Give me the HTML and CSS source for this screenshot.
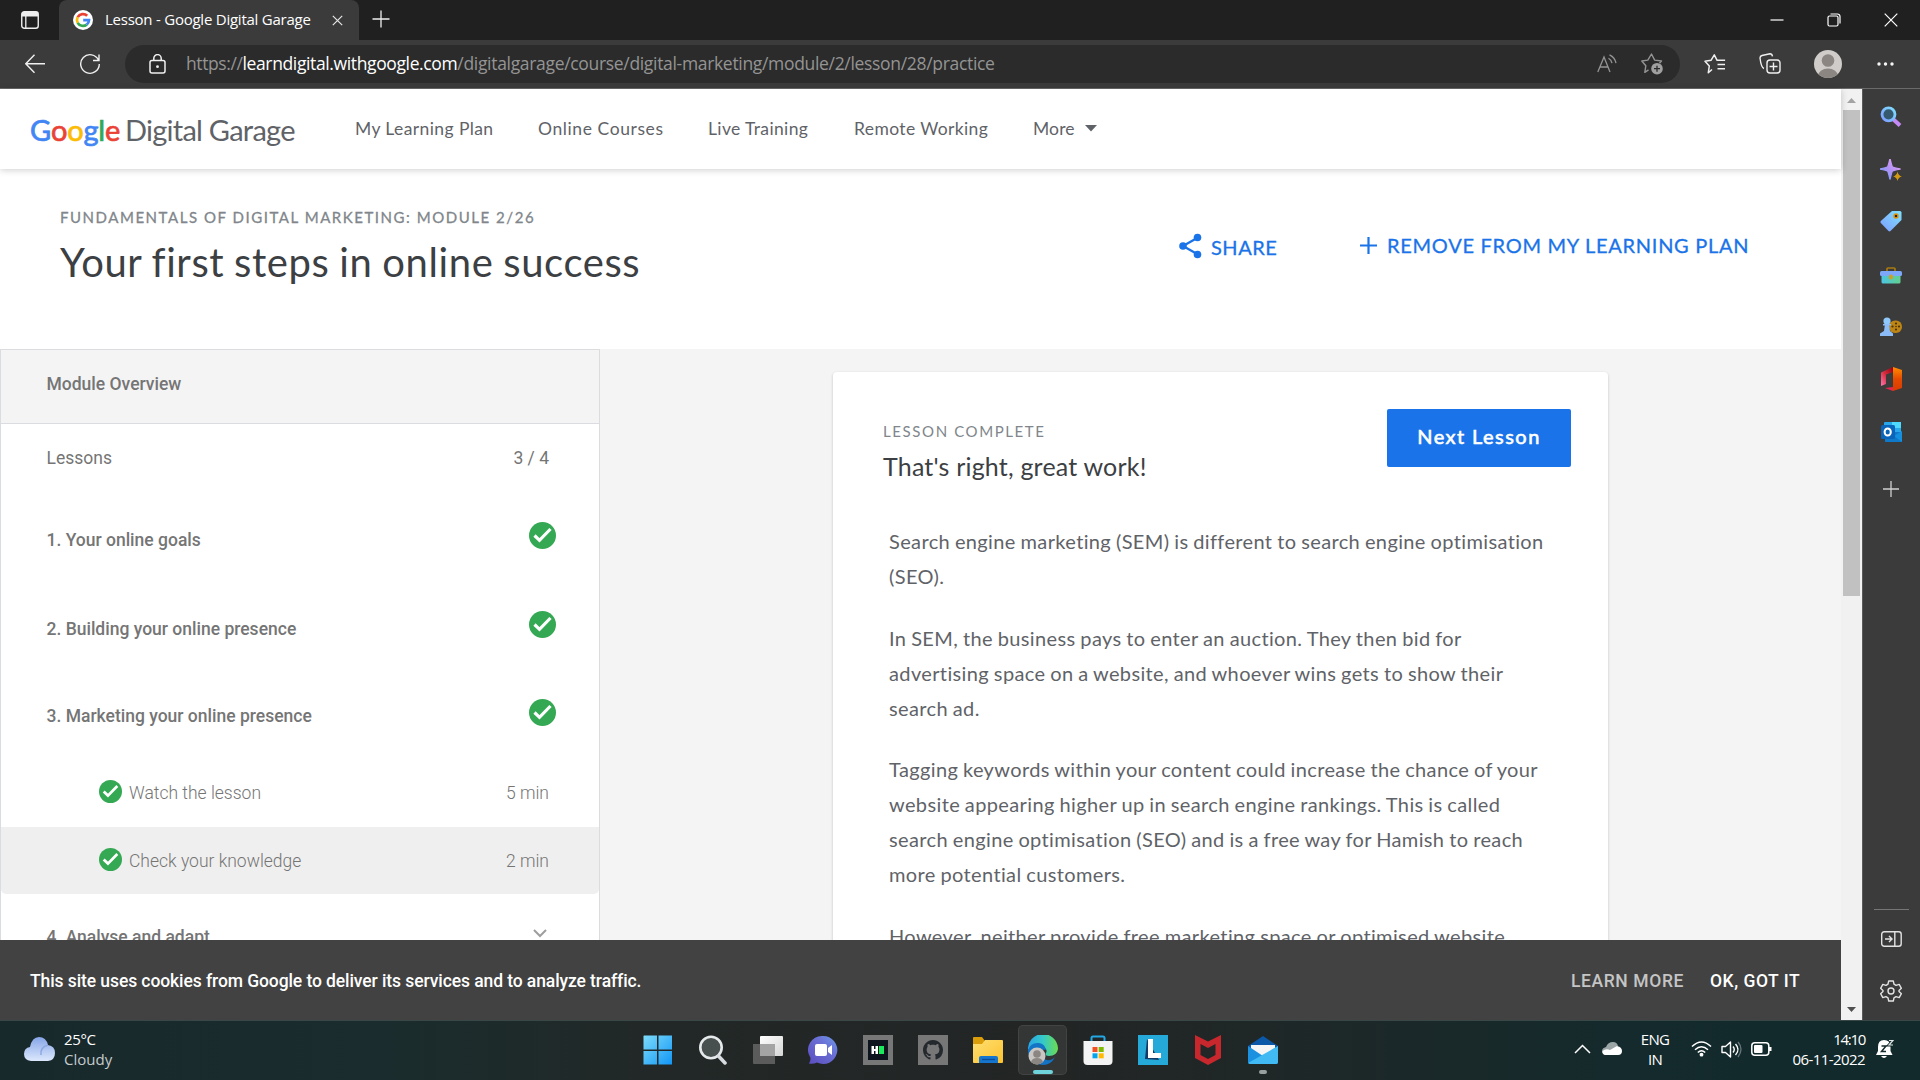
FILE: index.html
```
<!DOCTYPE html>
<html lang="en">
<head>
<meta charset="utf-8">
<title>Lesson - Google Digital Garage</title>
<link rel="stylesheet" href="styles.css">
</head>
<body>
<svg class="defs" width="0" height="0">
  <defs>
    <symbol id="check" viewBox="0 0 27 27"><circle cx="13.5" cy="13.5" r="13.5" fill="#34a853"/><path d="M5.500 13.500l5 4.800L21.500 7" fill="none" stroke="#fff" stroke-width="3.200"/></symbol>
    <linearGradient id="gSky" x1="0" y1="0" x2="1" y2="1"><stop offset="0" stop-color="#7ddcfb"/><stop offset="1" stop-color="#1296f5"/></linearGradient>
    <linearGradient id="gLens" x1="1" y1="0" x2="0" y2="1"><stop offset="0" stop-color="#7fe0ff"/><stop offset="1" stop-color="#7d9cff"/></linearGradient>
    <linearGradient id="gStar" x1="0" y1="1" x2="1" y2="0"><stop offset="0" stop-color="#64a4ff"/><stop offset=".5" stop-color="#b492f5"/><stop offset="1" stop-color="#efa5f5"/></linearGradient>
    <linearGradient id="gCase" x1="0" y1="0" x2="1" y2="0"><stop offset="0" stop-color="#4cc5e4"/><stop offset="1" stop-color="#62d08d"/></linearGradient>
    <linearGradient id="gOffice" x1="0" y1="0" x2="0" y2="1"><stop offset="0" stop-color="#ff8f00"/><stop offset=".5" stop-color="#e64a00"/><stop offset="1" stop-color="#d83b01"/></linearGradient>
    <linearGradient id="gOffice2" x1="1" y1="0" x2="0" y2="1"><stop offset="0" stop-color="#8f0010"/><stop offset=".5" stop-color="#d42b3c"/><stop offset="1" stop-color="#ff77b0"/></linearGradient>
    <linearGradient id="gChat" x1="0" y1="1" x2="1" y2="0"><stop offset="0" stop-color="#5b4cc0"/><stop offset=".6" stop-color="#6a6ed4"/><stop offset="1" stop-color="#6c9be8"/></linearGradient>
    <linearGradient id="gFolder" x1="0" y1="0" x2="1" y2="1"><stop offset="0" stop-color="#ffdf72"/><stop offset="1" stop-color="#fcc22e"/></linearGradient>
    <linearGradient id="gEdge" x1="0" y1="0" x2="1" y2="0"><stop offset="0" stop-color="#2aa5e8"/><stop offset=".5" stop-color="#35c8c9"/><stop offset="1" stop-color="#6bdc51"/></linearGradient>
    <linearGradient id="gCloud" x1="0" y1="0" x2="0" y2="1"><stop offset="0" stop-color="#86a5e8"/><stop offset="1" stop-color="#dce8fc"/></linearGradient>
    <linearGradient id="gGrey" x1="0" y1="0" x2="1" y2="1"><stop offset="0" stop-color="#fff"/><stop offset="1" stop-color="#d5d5d5"/></linearGradient>
  </defs>
</svg>

<div class="screen">
  <header class="titlebar">
    <div class="workspaces"><svg width="18" height="18" viewBox="0 0 18 18"><rect x=".75" y=".75" width="16.500" height="16.500" rx="2.500" fill="none" stroke="#eee" stroke-width="1.400"/><path d="M1 1h16v4.500H1z" fill="#eee"/><path d="M4.800 5v12" stroke="#eee" stroke-width="1.300"/></svg></div>
    <div class="tab">
      <svg width="20" height="20" viewBox="0 0 20 20"><circle cx="10" cy="10" r="10" fill="#fff"/><g fill="none" stroke-width="2.700"><path d="M14.200 5.800A6 6 0 0 0 4.700 7.200" stroke="#ea4335"/><path d="M4.700 7.200a6 6 0 0 0 0 5.600" stroke="#fbbc05"/><path d="M4.700 12.800a6 6 0 0 0 9 1.800" stroke="#34a853"/><path d="M13.700 14.600A6 6 0 0 0 16 10.200H10.200" stroke="#4285f4"/></g></svg>
      <span class="tab-title">Lesson - Google Digital Garage</span>
      <svg width="11" height="11" viewBox="0 0 11 11"><path d="M.8.800l9.400 9.400M10.200.8L.8 10.200" stroke="#e6e6e6" stroke-width="1.200"/></svg>
    </div>
    <svg class="newtab" width="18" height="18" viewBox="0 0 18 18"><path d="M9 .5v17M.5 9h17" stroke="#eee" stroke-width="1.300"/></svg>
    <div class="window-buttons">
      <svg width="14" height="14" viewBox="0 0 14 14"><path d="M.5 7h13" stroke="#fff" stroke-width="1.200"/></svg>
      <svg width="14" height="14" viewBox="0 0 14 14"><rect x="1" y="3" width="10" height="10" rx="1.500" fill="none" stroke="#fff" stroke-width="1.200"/><path d="M3.500 1h7A2.500 2.500 0 0 1 13 3.500v7" fill="none" stroke="#fff" stroke-width="1.200"/></svg>
      <svg width="14" height="14" viewBox="0 0 14 14"><path d="M.7.700l12.600 12.600M13.300.7L.7 13.300" stroke="#fff" stroke-width="1.200"/></svg>
    </div>
  </header>

  <div class="toolbar">
    <svg class="back" width="20" height="20" viewBox="0 0 20 20"><path d="M20 9.700H1M9.500.8L.8 9.700l8.700 9" fill="none" stroke="#f0f0f0" stroke-width="1.400"/></svg>
    <svg class="reload" width="22" height="22" viewBox="0 0 22 22"><path d="M19.500 7.200A9.300 9.300 0 1 0 20.300 11M20 1.500v6h-6" fill="none" stroke="#f0f0f0" stroke-width="1.400"/></svg>
    <div class="address">
      <svg width="17" height="20" viewBox="0 0 17 20"><rect x="1" y="6.500" width="15" height="12.500" rx="2" fill="none" stroke="#f0f0f0" stroke-width="1.500"/><path d="M4.800 6.500V4.300a3.700 3.700 0 0 1 7.400 0v2.200" fill="none" stroke="#f0f0f0" stroke-width="1.500"/><circle cx="8.500" cy="12.700" r="1.400" fill="#f0f0f0"/></svg>
      <div class="url"><span class="scheme">https://</span><span class="host">learndigital.withgoogle.com</span><span class="path">/digitalgarage/course/digital-marketing/module/2/lesson/28/practice</span></div>
      <svg width="20" height="20" viewBox="0 0 20 20"><path d="M.8 18L7 3l6 15M3 13h8" fill="none" stroke="#949494" stroke-width="1.300"/><path d="M11.500 4.200q2.800 1.500 3.500 5M12.500.8q5.500 2.500 6.500 8.400" fill="none" stroke="#949494" stroke-width="1.300"/></svg>
      <svg class="addfav" width="23" height="22" viewBox="0 0 23 22"><path d="M7.500 16.800l-3.700 2.500 1-6.500L.8 8l6-.9L10.500 1l3.200 6.100 6.800.9-2 2.200" fill="none" stroke="#949494" stroke-width="1.400" stroke-linejoin="round"/><circle cx="16" cy="15.700" r="5.800" fill="#a0a0a0"/><path d="M16 12.700v6M13 15.700h6" stroke="#2b2b2b" stroke-width="1.300"/></svg>
    </div>
    <div class="tools">
      <svg width="22" height="20" viewBox="0 0 22 20"><path d="M8 15.500L4.300 18.700l1-6.700L1 7.200l6-.9L10.300.8l2.800 5.500h8M13.500 10.500H21M13.500 14.700H21" fill="none" stroke="#f0f0f0" stroke-width="1.500" stroke-linejoin="round"/></svg>
      <svg width="22" height="22" viewBox="0 0 22 22"><path d="M5 15.500C3 15 1.500 9 1 5q0-2 2-2.500l8-1.700q2 0 2.500 2.500M11 7h7a3 3 0 0 1 3 3v7a3 3 0 0 1-3 3h-7a3 3 0 0 1-3-3v-7a3 3 0 0 1 3-3zM14.500 9.500v8M10.500 13.500h8" fill="none" stroke="#f0f0f0" stroke-width="1.400"/></svg>
      <svg width="28" height="28" viewBox="0 0 28 28"><clipPath id="av"><circle cx="14" cy="14" r="14"/></clipPath><g clip-path="url(#av)"><path d="M0 0h28v28H0z" fill="#cfccc9"/><circle cx="14" cy="10.500" r="6.300" fill="#8b8682"/><ellipse cx="14" cy="26" rx="10" ry="7.500" fill="#8b8682"/></g></svg>
      <svg width="17" height="4" viewBox="0 0 17 4"><g fill="#f5f5f5"><circle cx="2" cy="2" r="1.700"/><circle cx="8.500" cy="2" r="1.700"/><circle cx="15" cy="2" r="1.700"/></g></svg>
    </div>
  </div>

  <div class="workspace">
    <div class="site">
      <nav class="sitenav">
        <div class="logo"><span class="google"><b class="bl">G</b><b class="re">o</b><b class="ye">o</b><b class="bl">g</b><b class="gr">l</b><b class="re">e</b></span><span class="garage">Digital Garage</span></div>
        <a class="n1">My Learning Plan</a><a class="n2">Online Courses</a><a class="n3">Live Training</a><a class="n4">Remote Working</a><a class="n5">More</a>
        <svg width="12" height="7" viewBox="0 0 12 7"><path d="M0 0h12L6 6.500z" fill="#5f6368"/></svg>
      </nav>
      <section class="hero">
        <div class="hero-text">
          <div class="eyebrow">FUNDAMENTALS OF DIGITAL MARKETING: MODULE 2/26</div>
          <h1>Your first steps in online success</h1>
        </div>
        <div class="share"><svg width="23" height="26" viewBox="0 0 23 26"><path d="M19 4.500L4 13l15 8.500" fill="none" stroke="#1a73e8" stroke-width="2.300"/><g fill="#1a73e8"><circle cx="18.500" cy="4.500" r="3.800"/><circle cx="4" cy="13" r="3.800"/><circle cx="18.500" cy="21.500" r="3.800"/></g></svg><span>SHARE</span></div>
        <div class="remove"><svg width="17" height="17" viewBox="0 0 17 17"><path d="M8.500 0v17M0 8.500h17" stroke="#1a73e8" stroke-width="2.200"/></svg><span>REMOVE FROM MY LEARNING PLAN</span></div>
      </section>
      <main class="lesson">
        <aside class="modules">
          <div class="mod-head">Module Overview</div>
          <div class="row count"><span>Lessons</span><span>3 / 4</span></div>
          <div class="row item first"><span>1. Your online goals</span><svg width="27" height="27"><use href="#check"/></svg></div>
          <div class="row item second"><span>2. Building your online presence</span><svg width="27" height="27"><use href="#check"/></svg></div>
          <div class="row item"><span>3. Marketing your online presence</span><svg width="27" height="27"><use href="#check"/></svg></div>
          <div class="row sub"><svg width="23" height="23"><use href="#check"/></svg><span>Watch the lesson</span><span class="time">5 min</span></div>
          <div class="row sub current"><svg width="23" height="23"><use href="#check"/></svg><span>Check your knowledge</span><span class="time">2 min</span></div>
          <div class="row last"><span>4. Analyse and adapt</span><svg width="14" height="9" viewBox="0 0 14 9"><path d="M1 1l6 6 6-6" fill="none" stroke="#9e9e9e" stroke-width="2"/></svg></div>
        </aside>
        <div class="stage">
          <article class="card">
            <div class="card-head">
              <div><div class="status">LESSON COMPLETE</div><h2>That's right, great work!</h2></div>
              <button class="next">Next Lesson</button>
            </div>
            <div class="copy">
              <p>Search engine marketing (SEM) is different to search engine optimisation<br>(SEO).</p>
              <p>In SEM, the business pays to enter an auction. They then bid for<br>advertising space on a website, and whoever wins gets to show their<br>search ad.</p>
              <p>Tagging keywords within your content could increase the chance of your<br>website appearing higher up in search engine rankings. This is called<br>search engine optimisation (SEO) and is a free way for Hamish to reach<br>more potential customers.</p>
              <p>However, neither provide free marketing space or optimised website</p>
            </div>
          </article>
        </div>
      </main>
      <div class="cookies"><span class="msg">This site uses cookies from Google to deliver its services and to analyze traffic.</span><a class="learn">LEARN MORE</a><a class="ok">OK, GOT IT</a></div>
    </div>
    <div class="scrollbar">
      <svg width="9" height="5" viewBox="0 0 9 5"><path d="M0 5L4.500 0 9 5z" fill="#a3a3a3"/></svg>
      <div class="thumb"></div>
      <svg class="down" width="9" height="5" viewBox="0 0 9 5"><path d="M0 0h9L4.500 5z" fill="#505050"/></svg>
    </div>
    <div class="sidebar">
      <svg class="s1" width="22" height="22" viewBox="0 0 22 22"><path d="M13.500 13.500l6.500 6" stroke="#c58af5" stroke-width="4"/><circle cx="8.500" cy="8.300" r="6.500" fill="#355a70" stroke="url(#gLens)" stroke-width="2.800"/></svg>
      <svg class="s2" width="22" height="22" viewBox="0 0 22 22"><path d="M10 0q1.800 7.500 2.500 8 .8.700 7.500 2-6.700 1.300-7.500 2-.7.500-2.500 8-1.800-7.500-2.500-8-.8-.7-7.500-2 6.700-1.300 7.500-2 .7-.5 2.500-8z" fill="url(#gStar)" stroke="url(#gStar)" stroke-width="1.500" stroke-linejoin="round"/><path d="M17.500 12.500q.8 4.200 4.500 5-3.700.8-4.500 4.500-.8-3.700-4.500-4.500 3.700-.8 4.500-5z" fill="#d29a12"/></svg>
      <svg class="s3" width="22" height="22" viewBox="0 0 22 22"><path d="M12 1h8q1.500 0 1.500 1.500v7.500L10.500 21Q9.500 21.800 8.500 21L.8 13q-.8-1 0-2z" fill="url(#gLens)"/><circle cx="16" cy="6" r="2" fill="#222" stroke="#e39400" stroke-width="1.500"/></svg>
      <svg class="s4" width="22" height="17" viewBox="0 0 22 17"><path d="M7 4V1.700Q7 1 8 1h6q1 0 1 .7V4" fill="none" stroke="#a97a10" stroke-width="1.700"/><path d="M1.500 7h19v8q0 1.500-1.500 1.500H3Q1.500 16.500 1.500 15z" fill="url(#gCase)"/><rect y="4" width="22" height="5" rx="1.500" fill="#7da7f8"/><rect x="9" y="7.500" width="4" height="5" rx="2" fill="#d0a020"/></svg>
      <svg class="s5" width="22" height="19" viewBox="0 0 22 19"><rect x="9" y="3.500" width="13" height="12.500" rx="6" fill="#bd8515"/><g fill="#4b3208"><circle cx="16" cy="6.500" r="1.100"/><circle cx="12.500" cy="9.500" r="1.100"/><circle cx="19" cy="9.500" r="1.100"/><circle cx="16" cy="12.500" r="1.100"/><circle cx="16" cy="9.500" r=".8"/></g><circle cx="7" cy="4" r="3.600" fill="#8fc9fb"/><path d="M3 7h8v1.500H9.200L10 14l3 2.500V19H0v-2.500L4 14l.8-5.500H3z" fill="#8bbcf8"/></svg>
      <svg class="s6" width="21" height="24" viewBox="0 0 21 24"><path d="M12 0l9 3v18l-9 3z" fill="url(#gOffice)"/><path d="M12 0v5L5 7.500V17L0 19V5.500z" fill="url(#gOffice2)"/><path d="M4 21l8-1v4z" fill="#e8274e"/></svg>
      <svg class="s7" width="21" height="21" viewBox="0 0 21 21"><path d="M4 0h15q1 0 1 1v9H3V1q0-1 1-1z" fill="#28a8ea"/><path d="M11 0h9v6h-9z" fill="#50d9ff"/><path d="M4 10h17v10H4z" fill="#0f78c9"/><path d="M13 14l8-5v11z" fill="#1490df"/><rect y="3" width="14" height="14" rx="1.500" fill="#0a64ba"/><ellipse cx="6.700" cy="10" rx="3.100" ry="3.500" fill="none" stroke="#fff" stroke-width="2"/></svg>
      <svg class="s8" width="16" height="16" viewBox="0 0 16 16"><path d="M8 0v16M0 8h16" stroke="#d0d0d0" stroke-width="1.300"/></svg>
      <div class="rule"></div>
      <svg class="s9" width="21" height="16" viewBox="0 0 21 16"><rect x=".7" y=".7" width="19.500" height="14.500" rx="2.500" fill="none" stroke="#e3e3e3" stroke-width="1.400"/><path d="M13.800 1v14M4 8h7M8 5l3 3-3 3" fill="none" stroke="#e3e3e3" stroke-width="1.400"/></svg>
      <svg class="s10" width="22" height="22" viewBox="0 0 22 22"><path d="M8.700 1h4.600l.7 3.200 2 1.200 3.200-1 2.200 3.900L19 10.500v1l2.400 2.200-2.200 3.900-3.200-1-2 1.200-.7 3.200H8.700L8 17.800l-2-1.200-3.200 1L.6 13.700 3 11.500v-1L.6 8.300l2.200-3.900 3.200 1 2-1.200z" fill="none" stroke="#e3e3e3" stroke-width="1.400" stroke-linejoin="round"/><circle cx="11" cy="11" r="3" fill="none" stroke="#e3e3e3" stroke-width="1.400"/></svg>
    </div>
  </div>

  <footer class="taskbar">
    <div class="weather">
      <svg width="31" height="24" viewBox="0 0 31 24"><path d="M7 24q-7-1-7-7 0-6 6-7Q8 0 15 0t9 8q7 1 7 8t-7 8z" fill="url(#gCloud)"/><path d="M17 18q-1-8 7-10" fill="none" stroke="#8ba7e2" stroke-width="1.500"/></svg>
      <div><div class="deg">25°C</div><div class="sky">Cloudy</div></div>
    </div>
    <div class="apps">
      <div><svg width="30" height="30" viewBox="0 0 30 30"><path d="M1 .5h13v14H.5V1zM15.500.5H29v14H15.500zM.5 16H14v13.500H.5zM15.500 16H29v13.500H15.500z" fill="url(#gSky)"/></svg></div>
      <div><svg width="30" height="30" viewBox="0 0 30 30"><circle cx="13" cy="12.500" r="10.700" fill="#48504f" stroke="#e6e9eb" stroke-width="2.600"/><path d="M20.500 21l6.500 7" stroke="#d8dbe0" stroke-width="3.500" stroke-linecap="round"/></svg></div>
      <div><svg width="30" height="30" viewBox="0 0 30 30"><rect x="7" y="1" width="23" height="20" rx="1" fill="url(#gGrey)"/><path d="M0 9h22v20H1q-1 0-1-1z" fill="#5b5b5b"/><path d="M7 9h15v12H7z" fill="#a4a4a4"/></svg></div>
      <div><svg width="30" height="30" viewBox="0 0 30 30"><path d="M15 1a14 14 0 1 1-6 26.500q-4 1.800-8 1 2-3 1.300-6A14 14 0 0 1 15 1z" fill="url(#gChat)"/><rect x="7" y="9" width="12" height="12" rx="2" fill="#fff"/><path d="M20 13l4-3v10l-4-3z" fill="#fff"/></svg></div>
      <div><svg width="30" height="30" viewBox="0 0 30 30"><path d="M0 0h30v30H0z" fill="#777"/><path d="M5 5h20v20H5z" fill="#0e141e"/><path d="M8.500 11H11v3h1.500v-3H15v8h-2.500v-3H11v3H8.500z" fill="#fff"/><path d="M16 11h5v8h-5z" fill="#1ce85c"/></svg></div>
      <div><svg width="30" height="30" viewBox="0 0 30 30"><path d="M0 0h30v30H0z" fill="#777"/><path transform="translate(5 5) scale(1.250)" d="M8 0C3.580 0 0 3.580 0 8c0 3.540 2.290 6.530 5.470 7.590.4.070.55-.17.55-.38 0-.19-.01-.82-.01-1.490-2.010.37-2.530-.49-2.690-.94-.09-.23-.48-.94-.82-1.130-.28-.15-.68-.52-.01-.53.63-.01 1.080.58 1.230.82.72 1.210 1.870.87 2.330.66.070-.52.28-.87.51-1.070-1.780-.2-3.640-.89-3.640-3.950 0-.87.31-1.590.82-2.150-.08-.2-.36-1.020.08-2.120 0 0 .67-.21 2.200.82.64-.18 1.320-.27 2-.27s1.360.09 2 .27c1.530-1.040 2.200-.82 2.200-.82.44 1.100.16 1.920.08 2.120.51.56.82 1.270.82 2.150 0 3.070-1.870 3.750-3.650 3.950.29.25.54.73.54 1.480 0 1.070-.01 1.930-.01 2.200 0 .21.15.46.55.38A8.010 8.010 0 0 0 16 8c0-4.420-3.580-8-8-8z" fill="#24292e"/></svg></div>
      <div><svg width="30" height="30" viewBox="0 0 30 30"><path d="M0 3q0-1 1-1h8l3 4v7H0z" fill="#dc9d0a"/><path d="M0 9h9l3-4h17q1 0 1 1v21q0 1-1 1H1q-1 0-1-1z" fill="url(#gFolder)"/><path d="M6 28v-5q0-2 2-2h15q2 0 2 2v5z" fill="#1675cd"/><path d="M9 24.500h13" stroke="#0b4b98" stroke-width="1.300"/></svg></div>
      <div class="active"><svg width="30" height="30" viewBox="0 0 30 30"><path d="M0 15A15 15 0 0 1 30 13c0 5-4 8-9 8-3 0-4-1-3-3q2-4-3-6Q5 9 0 15z" fill="url(#gEdge)"/><path d="M0 15q3-8 11-7 6 1 7 7c-7-2-9 8 1 10 3 1 6-1 8-3Q23 30 15 30A15 15 0 0 1 0 15z" fill="#1373c4"/><circle cx="9" cy="21" r="8.500" fill="#c9c6c3"/><circle cx="9" cy="19" r="3.800" fill="#8b8682"/><path d="M3 27q1-4 6-4t6 4q-6 5-12 0z" fill="#8b8682"/></svg></div>
      <div><svg width="30" height="30" viewBox="0 0 30 30"><path d="M8.500 7V3q0-1.500 1.500-1.500h10Q21.500 1.500 21.500 3v4" fill="none" stroke="#23a7e5" stroke-width="2"/><path d="M.5 6h29v20q0 4-4 4h-21q-4 0-4-4z" fill="#f3f3f3"/><path d="M9.500 12h5v5h-5z" fill="#f25022"/><path d="M15.700 12h5v5h-5z" fill="#7fba00"/><path d="M9.500 18.300h5v5h-5z" fill="#00a4ef"/><path d="M15.700 18.300h5v5h-5z" fill="#ffb900"/></svg></div>
      <div><svg width="30" height="30" viewBox="0 0 30 30"><path d="M0 0h30v30H0z" fill="#25a9d8"/><path d="M9 4L7 24l14 1z" fill="#123b68"/><path d="M10 4h5v14h8v5H10z" fill="#fff"/></svg></div>
      <div><svg width="30" height="30" viewBox="0 0 30 30"><path d="M2 0l13 6.500L28 0v23l-13 7-13-7z" fill="#c8282d"/><path d="M7.500 9l7.500 4 7.500-4v11L15 24l-7.500-4z" fill="#222626"/></svg></div>
      <div class="open"><svg width="30" height="30" viewBox="0 0 30 30"><path d="M0 11L15 1l15 10v6H0z" fill="#0b57a8"/><path d="M3 10h24v12H3z" fill="#f5f5f5"/><path d="M0 11l15 10L30 11v16q0 2-2 2H2q-2 0-2-2z" fill="#1b91e0"/><path d="M0 28l30-17v16q0 2-2 2H2z" fill="#41b9f2"/></svg></div>
    </div>
    <div class="tray">
      <svg class="t1" width="17" height="10" viewBox="0 0 17 10"><path d="M1 9l7.500-7.500L16 9" fill="none" stroke="#fff" stroke-width="1.500"/></svg>
      <svg class="t2" width="20" height="14" viewBox="0 0 20 14"><path d="M5 13q-5 0-5-4 0-3 4-4 2-5 7-5 4 0 5 4l-6 5z" fill="#9ba5a6"/><path d="M3 13q-3-1-2.500-4Q4 6 8 8l7-4q5 1 5 5t-4 4z" fill="#fff"/></svg>
      <div class="lang"><div>ENG</div><div>IN</div></div>
      <svg class="t3" width="21" height="16" viewBox="0 0 21 16"><g fill="none" stroke="#fff" stroke-width="1.500"><path d="M1 5.500q9.500-9 19 0M4 8.700q6.500-6 13 0M6.800 11.500q3.700-3.500 7.400 0"/></g><circle cx="10.500" cy="13.700" r="1.900" fill="#fff"/></svg>
      <svg class="t4" width="21" height="17" viewBox="0 0 21 17"><path d="M1 5.500h3.500L9.500 1v15l-5-4.500H1z" fill="none" stroke="#fff" stroke-width="1.400" stroke-linejoin="round"/><path d="M12 5.500q2.500 3 0 6M14.500 3q5 5.500 0 11" fill="none" stroke="#fff" stroke-width="1.400"/><path d="M17 1q6 7 0 15" fill="none" stroke="#65777a" stroke-width="1.300"/></svg>
      <svg class="t5" width="21" height="14" viewBox="0 0 21 14"><rect x=".8" y=".8" width="17" height="12.400" rx="3" fill="none" stroke="#fff" stroke-width="1.500"/><rect x="3" y="3" width="8.500" height="8" rx="1" fill="#fff"/><path d="M18 5h2.500v4H18z" fill="#fff"/></svg>
      <div class="clock"><div class="hm">14:10</div><div class="date">06-11-2022</div></div>
      <svg class="t6" width="18" height="20" viewBox="0 0 18 20"><path d="M8 1q6.500 0 6.500 7v4l2 4H0l2-4V8q0-7 6-7z" fill="#fff"/><path d="M5 17h6q-3 4-6 0z" fill="#fff"/><path d="M5.500 7h4.500l-4.500 5.500h4.500" fill="none" stroke="#152b2d" stroke-width="1.500"/><path d="M13 1.500h4l-4 4.500h4" fill="none" stroke="#152b2d" stroke-width="3"/><path d="M13 1.500h4l-4 4.500h4" fill="none" stroke="#dfe5e6" stroke-width="1.200"/></svg>
    </div>
  </footer>
</div>
</body>
</html>
```
FILE: styles.css
```
* { box-sizing: border-box; }
body { margin: 0; background: #202020; }
svg { display: block; flex: none; }
.defs { position: absolute; }
h1, h2, p { margin: 0; font-weight: 400; }

.screen {
  width: 1920px;
  height: 1080px;
  display: grid;
  grid-template-rows: 40px 49px 931px 60px;
  overflow: hidden;
  white-space: nowrap;
  font-family: "Open Sans", "Noto Sans", sans-serif;
}

/* Title bar */
.titlebar { display: flex; align-items: stretch; background: #202020; }
.workspaces { width: 59px; padding: 11px 0 0 21px; }
.tab {
  width: 300px;
  display: flex;
  align-items: center;
  padding: 0 15px 0 14px;
  background: #3b3b3b;
  border-radius: 8px 8px 0 0;
}
.tab-title { width: 227px; margin-left: 12px; padding-bottom: 2px; font-size: 15px; letter-spacing: -.24px; color: #fff; }
.newtab { margin: 10px 0 0 13px; }
.window-buttons { display: flex; gap: 43px; align-items: center; margin-left: auto; padding-right: 22px; }

/* Toolbar */
.toolbar { display: flex; align-items: center; background: #3b3b3b; border-bottom: 1px solid #6a6a6a; padding-bottom: 1px; }
.back { margin-left: 25px; }
.reload { margin-left: 34px; }
.address {
  width: 1555px;
  height: 38px;
  margin-left: 24px;
  padding: 0 16px 0 24px;
  display: flex;
  align-items: center;
  border-radius: 19px;
  background: #2b2b2b;
}
.url { flex: 1; margin-left: 20px; padding-bottom: 2px; font-size: 17.5px; color: #949494; }
.scheme { letter-spacing: -.4px; }
.host { letter-spacing: -.37px; color: #fff; }
.path { letter-spacing: -.32px; }
.addfav { margin-left: 24px; }
.tools { display: flex; align-items: center; margin-left: 24px; }
.tools svg:nth-child(2) { margin-left: 33px; }
.tools svg:nth-child(3) { margin-left: 33px; }
.tools svg:nth-child(4) { margin-left: 35px; }

/* Window area */
.workspace { display: grid; grid-template-columns: 1841px 21px 58px; background: #3b3b3b; }
.site {
  height: 931px;
  display: grid;
  grid-template-rows: 80px 180px 591px 80px;
  background: #fff;
  font-family: Lato, sans-serif;
}

.sitenav {
  position: relative;
  display: flex;
  align-items: center;
  padding: 0 0 2px 30px;
  background: #fff;
  box-shadow: 0 1px 7px rgba(0, 0, 0, .2);
  font-size: 17.5px;
  color: #5f6368;
}
.logo { display: flex; width: 325px; font-size: 29px; padding-top: 3px; }
.google { width: 95px; letter-spacing: -.15px; }
.google b { font-weight: 400; -webkit-text-stroke: .7px currentColor; }
.bl { color: #4285f4; }
.re { color: #ea4335; }
.ye { color: #fbbc05; }
.gr { color: #34a853; }
.garage { letter-spacing: -.75px; }
.n1 { width: 183px; letter-spacing: .4px; }
.n2 { width: 170px; letter-spacing: .59px; }
.n3 { width: 146px; letter-spacing: .36px; }
.n4 { width: 179px; letter-spacing: .38px; }
.n5 { width: 52px; letter-spacing: .12px; }

.hero { display: flex; align-items: flex-start; padding-left: 60px; color: #1a73e8; }
.hero-text { width: 1119px; padding-top: 38px; }
.eyebrow { font-size: 15px; line-height: 20px; letter-spacing: 1.54px; color: #80868b; -webkit-text-stroke: .3px currentColor; }
.hero h1 { margin-top: 11px; font-size: 40px; line-height: 48px; letter-spacing: .6px; word-spacing: -1px; color: #3c4043; }
.share, .remove { display: flex; align-items: center; font-size: 20px; line-height: 24px; -webkit-text-stroke: .3px currentColor; }
.share { width: 181px; gap: 9px; margin-top: 64px; letter-spacing: .51px; }
.share span { padding-top: 1px; }
.remove { gap: 10px; margin-top: 64px; letter-spacing: .72px; }

.lesson { display: grid; grid-template-columns: 600px 1fr; background: #f4f4f4; overflow: hidden; }
.modules {
  height: 640px;
  border: 1px solid #dadce0;
  background: #fff;
  font: 500 17.5px/24px Roboto, sans-serif;
  color: #757575;
}
.mod-head { height: 74px; padding: 22px 45.500px; background: #f4f4f4; border-bottom: 1px solid #dadce0; }
.row { display: flex; align-items: center; justify-content: space-between; padding: 0 50px 0 45.500px; }
.count { height: 67px; font-weight: 400; }
.item { height: 88px; padding-right: 43px; }
.first { height: 91px; }
.second { height: 87px; }
.item span { padding-top: 6px; }
.item svg { margin-top: -2px; }
.sub { height: 70px; justify-content: flex-start; padding-left: 98px; font-weight: 300; }
.sub svg { margin-top: -2px; }
.sub span { padding: 1px 0 0 7px; }
.sub .time { margin-left: auto; }
.current { height: 67px; background: #efefef; border-radius: 0 0 5px 5px; }
.last { height: 86px; padding-right: 52px; }
.last svg { margin-top: -7px; }

.stage { padding: 23px 0 0 233px; }
.card { width: 775px; height: 620px; padding-left: 50px; background: #fff; border-radius: 4px; box-shadow: 0 1px 3px rgba(0, 0, 0, .2); }
.card-head { display: flex; justify-content: space-between; align-items: flex-start; padding: 37px 37px 0 0; }
.status { margin-top: 12px; font-size: 15px; line-height: 20px; letter-spacing: 1.6px; color: #80868b; }
.card h2 { margin: 9px 0 1px; font-size: 25px; line-height: 32px; letter-spacing: .19px; color: #3c4043; }
.next {
  width: 184px;
  height: 58px;
  padding: 0 0 4px;
  border: 0;
  border-radius: 2px;
  background: #1a73e8;
  color: #fff;
  font: 400 20px Lato, sans-serif;
  letter-spacing: 1.45px;
  -webkit-text-stroke: .6px currentColor;
}
.copy { margin: 41px 0 0 6px; font-size: 20px; line-height: 35px; letter-spacing: .37px; word-spacing: -.7px; color: #5f6368; }
.copy p { margin-bottom: 26.500px; }

.cookies {
  display: flex;
  align-items: center;
  padding: 2px 0 0 30px;
  background: #424242;
  font: 500 17.5px Roboto, sans-serif;
  color: #fff;
}
.msg { width: 1541px; letter-spacing: -.09px; }
.learn { width: 139px; letter-spacing: .6px; color: #c5c5c5; }
.ok { letter-spacing: .52px; }

.scrollbar { display: flex; flex-direction: column; align-items: center; background: #f1f1f1; padding: 9px 0 8px; }
.thumb { width: 17px; height: 486px; margin-top: 7px; background: #c1c1c1; }
.down { margin-top: auto; }

.sidebar { display: flex; flex-direction: column; align-items: center; border-left: 1px solid #5a5a5a; padding: 17px 1px 0 0; }
.s2 { margin-top: 31px; }
.s3 { margin-top: 29px; }
.s4 { margin-top: 35px; }
.s5 { margin-top: 33px; }
.s6 { margin-top: 31px; }
.s7 { margin-top: 31px; }
.s8 { margin-top: 38px; }
.rule { width: 35px; height: 1px; margin-top: auto; background: #767676; }
.s9 { margin-top: 21px; }
.s10 { margin: 33px 0 18px; }

/* Taskbar */
.taskbar {
  display: grid;
  grid-template-columns: 630px 660px 630px;
  border-top: 1px solid #3a4747;
  background: linear-gradient(90deg, #18292c 0, #1a2c2d 20%, #222827 34%, #232525 55%, #1f2727 66%, #142a2c 85%, #122a2c 100%);
  color: #fff;
  font-size: 15px;
  line-height: 20px;
}
.weather { display: flex; align-items: center; gap: 9px; padding: 0 0 3px 24px; }
.deg { letter-spacing: -.34px; }
.sky { color: #c5cbcc; }
.apps { display: grid; grid-template-columns: repeat(12, 55px); }
.apps div { position: relative; display: flex; justify-content: center; padding-top: 14px; }
.apps .active::before { content: ""; position: absolute; inset: 4px 3px 5px; background: rgba(255, 255, 255, .08); border: 1px solid rgba(255, 255, 255, .07); border-radius: 5px; }
.apps .active svg { position: relative; }
.apps .active::after, .apps .open::after { content: ""; position: absolute; top: 49px; width: 20px; height: 4px; border-radius: 2px; background: #6fd3dc; }
.apps .open::after { width: 8px; background: #9a9f9f; }
.tray { display: flex; align-items: center; padding: 0 26px 3px 284px; }
.t2 { margin-left: 11px; }
.lang { width: 34px; margin-left: 16px; text-align: center; letter-spacing: -.7px; }
.t3 { margin-left: 19px; }
.t4 { margin-left: 9px; }
.t5 { margin-left: 9px; }
.clock { width: 93px; text-align: right; letter-spacing: -.58px; }
.hm { letter-spacing: -1.3px; }
.t6 { margin-left: 11px; }
```
